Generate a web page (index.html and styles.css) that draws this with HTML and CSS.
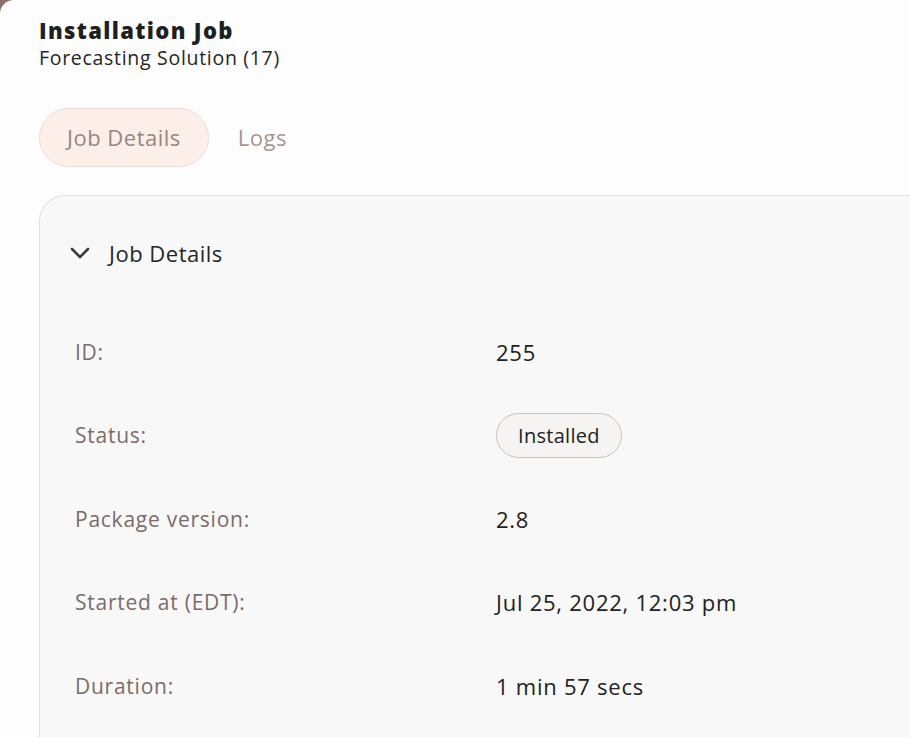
FILE: index.html
```html
<!DOCTYPE html>
<html>
<head>
<meta charset="utf-8">
<link rel="stylesheet" href="styles.css">
</head>
<body>
<div class="frame">
  <header class="head">
    <h1 class="title">Installation Job</h1>
    <div class="subtitle">Forecasting Solution (17)</div>
  </header>
  <nav class="tabs">
    <div class="tab active">Job Details</div>
    <div class="tab">Logs</div>
  </nav>
  <section class="card">
    <div class="card-head">
      <svg class="chev" width="20" height="12" viewBox="0 0 20 12"><path d="M2 2 L10 10 L18 2" fill="none" stroke="#3a3a3a" stroke-width="2.6" stroke-linecap="round" stroke-linejoin="round"/></svg>
      <span class="card-title">Job Details</span>
    </div>
    <div class="rows">
      <div class="label">ID:</div><div class="value">255</div>
      <div class="label">Status:</div><div class="value"><span class="badge">Installed</span></div>
      <div class="label">Package version:</div><div class="value">2.8</div>
      <div class="label">Started at (EDT):</div><div class="value">Jul 25, 2022, 12:03 pm</div>
      <div class="label">Duration:</div><div class="value">1 min 57 secs</div>
    </div>
  </section>
</div>
</body>
</html>
```
FILE: styles.css
```css
html, body {
  margin: 0;
  padding: 0;
  height: 100%;
  overflow: hidden;
  background: #8c7165;
}
.frame {
  background: #fdfdfd;
  height: 100vh;
  overflow: hidden;
  border-top-left-radius: 14px;
  padding: 17px 0 0 39px;
  box-sizing: border-box;
  font-family: "Open Sans", "Noto Sans", sans-serif;
  color: #222;
}
.title {
  margin: 0;
  font-size: 22px;
  font-weight: 800;
  letter-spacing: 1.35px;
  line-height: 26px;
  color: #1f1f1f;
}
.subtitle {
  margin-top: 2px;
  font-size: 19.5px;
  letter-spacing: 0.7px;
  line-height: 26px;
  color: #262626;
}
.tabs {
  display: flex;
  align-items: center;
  gap: 2px;
  margin-top: 37px;
}
.tab {
  font-size: 22px;
  letter-spacing: 0.5px;
  line-height: 57px;
  padding: 0 27px;
  color: #a8958e;
}
.tab.active {
  background: #fcefea;
  border: 1px solid #eddcd5;
  border-radius: 30px;
  color: #9a847c;
}
.card {
  margin-top: 28px;
  background: #f8f8f8;
  border: 1px solid #e6dfdb;
  border-right: none;
  border-bottom: none;
  border-radius: 26px 0 0 0;
  height: 560px;
  padding: 0 0 0 30px;
}
.card-head {
  display: flex;
  align-items: center;
  height: 114px;
  gap: 19px;
}
.chev {
  display: block;
}
.card-title {
  font-size: 22px;
  letter-spacing: 0.5px;
  color: #252525;
}
.rows {
  display: grid;
  grid-template-columns: 5px 421px 1fr;
  grid-auto-rows: 83.5px;
  align-items: center;
  margin-top: 0;
}
.label {
  grid-column: 2;
  font-size: 21px;
  letter-spacing: 0.75px;
  color: #7a6c68;
}
.value {
  grid-column: 3;
  font-size: 22px;
  letter-spacing: 0.75px;
  color: #222;
}
.badge {
  display: inline-block;
  border: 1px solid #c9c2be;
  background: #f5f4f3;
  border-radius: 24px;
  padding: 0 21px;
  line-height: 43px;
  font-size: 20px;
  letter-spacing: 0.3px;
}
```
